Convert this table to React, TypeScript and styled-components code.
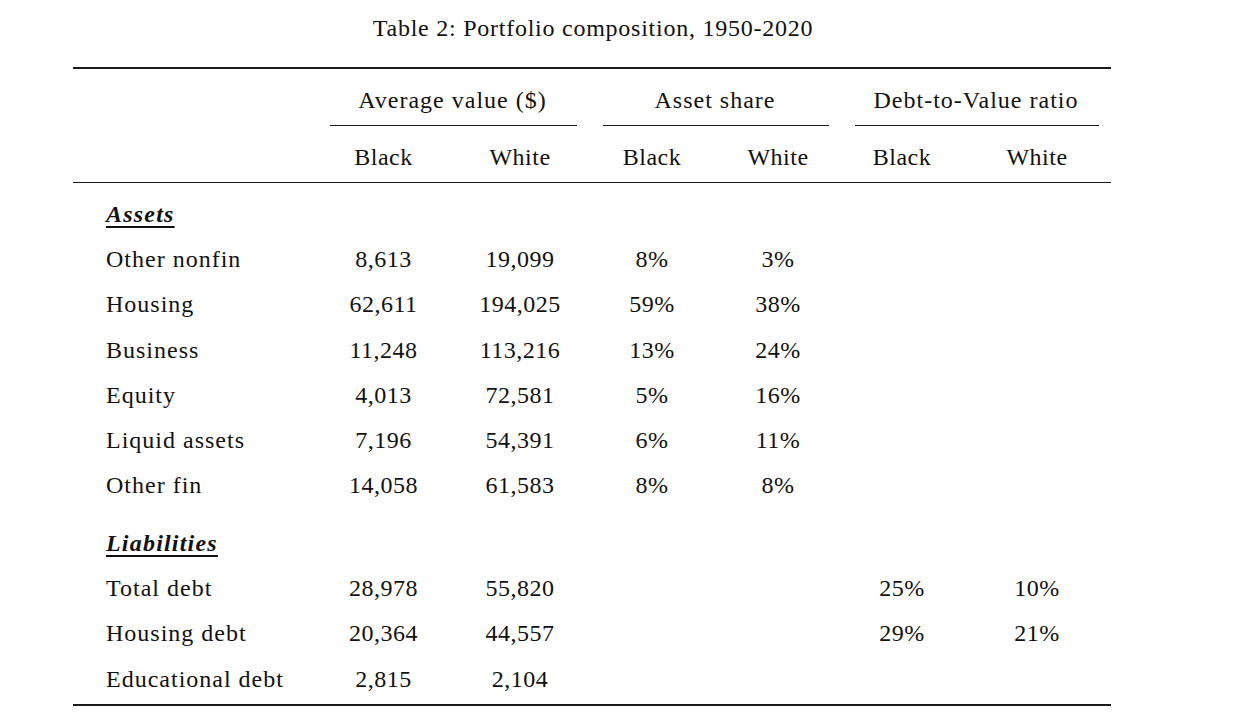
import styled, { createGlobalStyle } from "styled-components";

const GlobalStyle = createGlobalStyle`
  html, body {
    margin: 0;
    padding: 0;
    background: #ffffff;
  }
  body {
    font-family: "Liberation Serif", "Times New Roman", serif;
    color: #111111;
  }
`;

const COLUMNS = "243px 135px 138px 126px 126px 122px 148px";

const Page = styled.div`
  width: 1249px;
  height: 720px;
  overflow: hidden;
  display: flex;
  flex-direction: column;
  align-items: flex-start;
`;

const Caption = styled.div`
  width: 1186px;
  height: 67px;
  padding-top: 13px;
  box-sizing: border-box;
  text-align: center;
  font-size: 24px;
  line-height: 30px;
  letter-spacing: 0.75px;
`;

const Table = styled.div`
  margin-left: 73px;
  width: 1038px;
  display: flex;
  flex-direction: column;
`;

const Rule = styled.div<{ $thick?: boolean }>`
  height: ${({ $thick }) => ($thick ? 2 : 1)}px;
  background: #1a1a1a;
`;

const Row = styled.div<{ $h: number; $shift?: number }>`
  display: grid;
  grid-template-columns: ${COLUMNS};
  height: ${({ $h }) => $h}px;
  padding-top: ${({ $shift }) => $shift ?? 0}px;
  box-sizing: border-box;
  align-items: center;
  font-size: 24px;
  line-height: 28px;
  letter-spacing: 1px;
`;

const GroupHead = styled.div`
  grid-column: span 2;
  display: flex;
  flex-direction: column;
  height: 100%;
`;

const GroupTitle = styled.div`
  flex: 1;
  display: flex;
  align-items: center;
  justify-content: center;
  padding-top: 5px;
`;

const CMidRule = styled.div`
  height: 1px;
  background: #1a1a1a;
  margin: 0 12px 0 14px;
`;

const Label = styled.div`
  padding-left: 33px;
  white-space: nowrap;
`;

const Section = styled.span`
  font-weight: bold;
  font-style: italic;
  text-decoration: underline;
  text-decoration-thickness: 2px;
  text-underline-offset: 4px;
  letter-spacing: 1.2px;
`;

const Cell = styled.div`
  text-align: center;
  white-space: nowrap;
  letter-spacing: 0.5px;
`;

const Gap = styled.div<{ $h: number }>`
  height: ${({ $h }) => $h}px;
`;

type DataRow = [string, string, string, string, string, string, string];

const assets: DataRow[] = [
  ["Other nonfin", "8,613", "19,099", "8%", "3%", "", ""],
  ["Housing", "62,611", "194,025", "59%", "38%", "", ""],
  ["Business", "11,248", "113,216", "13%", "24%", "", ""],
  ["Equity", "4,013", "72,581", "5%", "16%", "", ""],
  ["Liquid assets", "7,196", "54,391", "6%", "11%", "", ""],
  ["Other fin", "14,058", "61,583", "8%", "8%", "", ""],
];

const liabilities: DataRow[] = [
  ["Total debt", "28,978", "55,820", "", "", "25%", "10%"],
  ["Housing debt", "20,364", "44,557", "", "", "29%", "21%"],
  ["Educational debt", "2,815", "2,104", "", "", "", ""],
];

const groups = ["Average value ($)", "Asset share", "Debt-to-Value ratio"];

function Body({ rows }: { rows: DataRow[] }) {
  return (
    <>
      {rows.map((r) => (
        <Row key={r[0]} $h={45.3}>
          <Label>{r[0]}</Label>
          {r.slice(1).map((v, i) => (
            <Cell key={i}>{v}</Cell>
          ))}
        </Row>
      ))}
    </>
  );
}

export default function App() {
  return (
    <Page>
      <GlobalStyle />
      <Caption>Table 2: Portfolio composition, 1950-2020</Caption>
      <Table>
        <Rule $thick />
        <Row $h={57}>
          <div />
          {groups.map((g) => (
            <GroupHead key={g}>
              <GroupTitle>{g}</GroupTitle>
              <CMidRule />
            </GroupHead>
          ))}
        </Row>
        <Row $h={56} $shift={6}>
          <div />
          <Cell>Black</Cell>
          <Cell>White</Cell>
          <Cell>Black</Cell>
          <Cell>White</Cell>
          <Cell>Black</Cell>
          <Cell>White</Cell>
        </Row>
        <Rule />
        <Gap $h={8} />
        <Row $h={45.3}>
          <Label>
            <Section>Assets</Section>
          </Label>
        </Row>
        <Body rows={assets} />
        <Gap $h={12} />
        <Row $h={45.3}>
          <Label>
            <Section>Liabilities</Section>
          </Label>
        </Row>
        <Body rows={liabilities} />
        <Gap $h={3} />
        <Rule $thick />
      </Table>
    </Page>
  );
}
